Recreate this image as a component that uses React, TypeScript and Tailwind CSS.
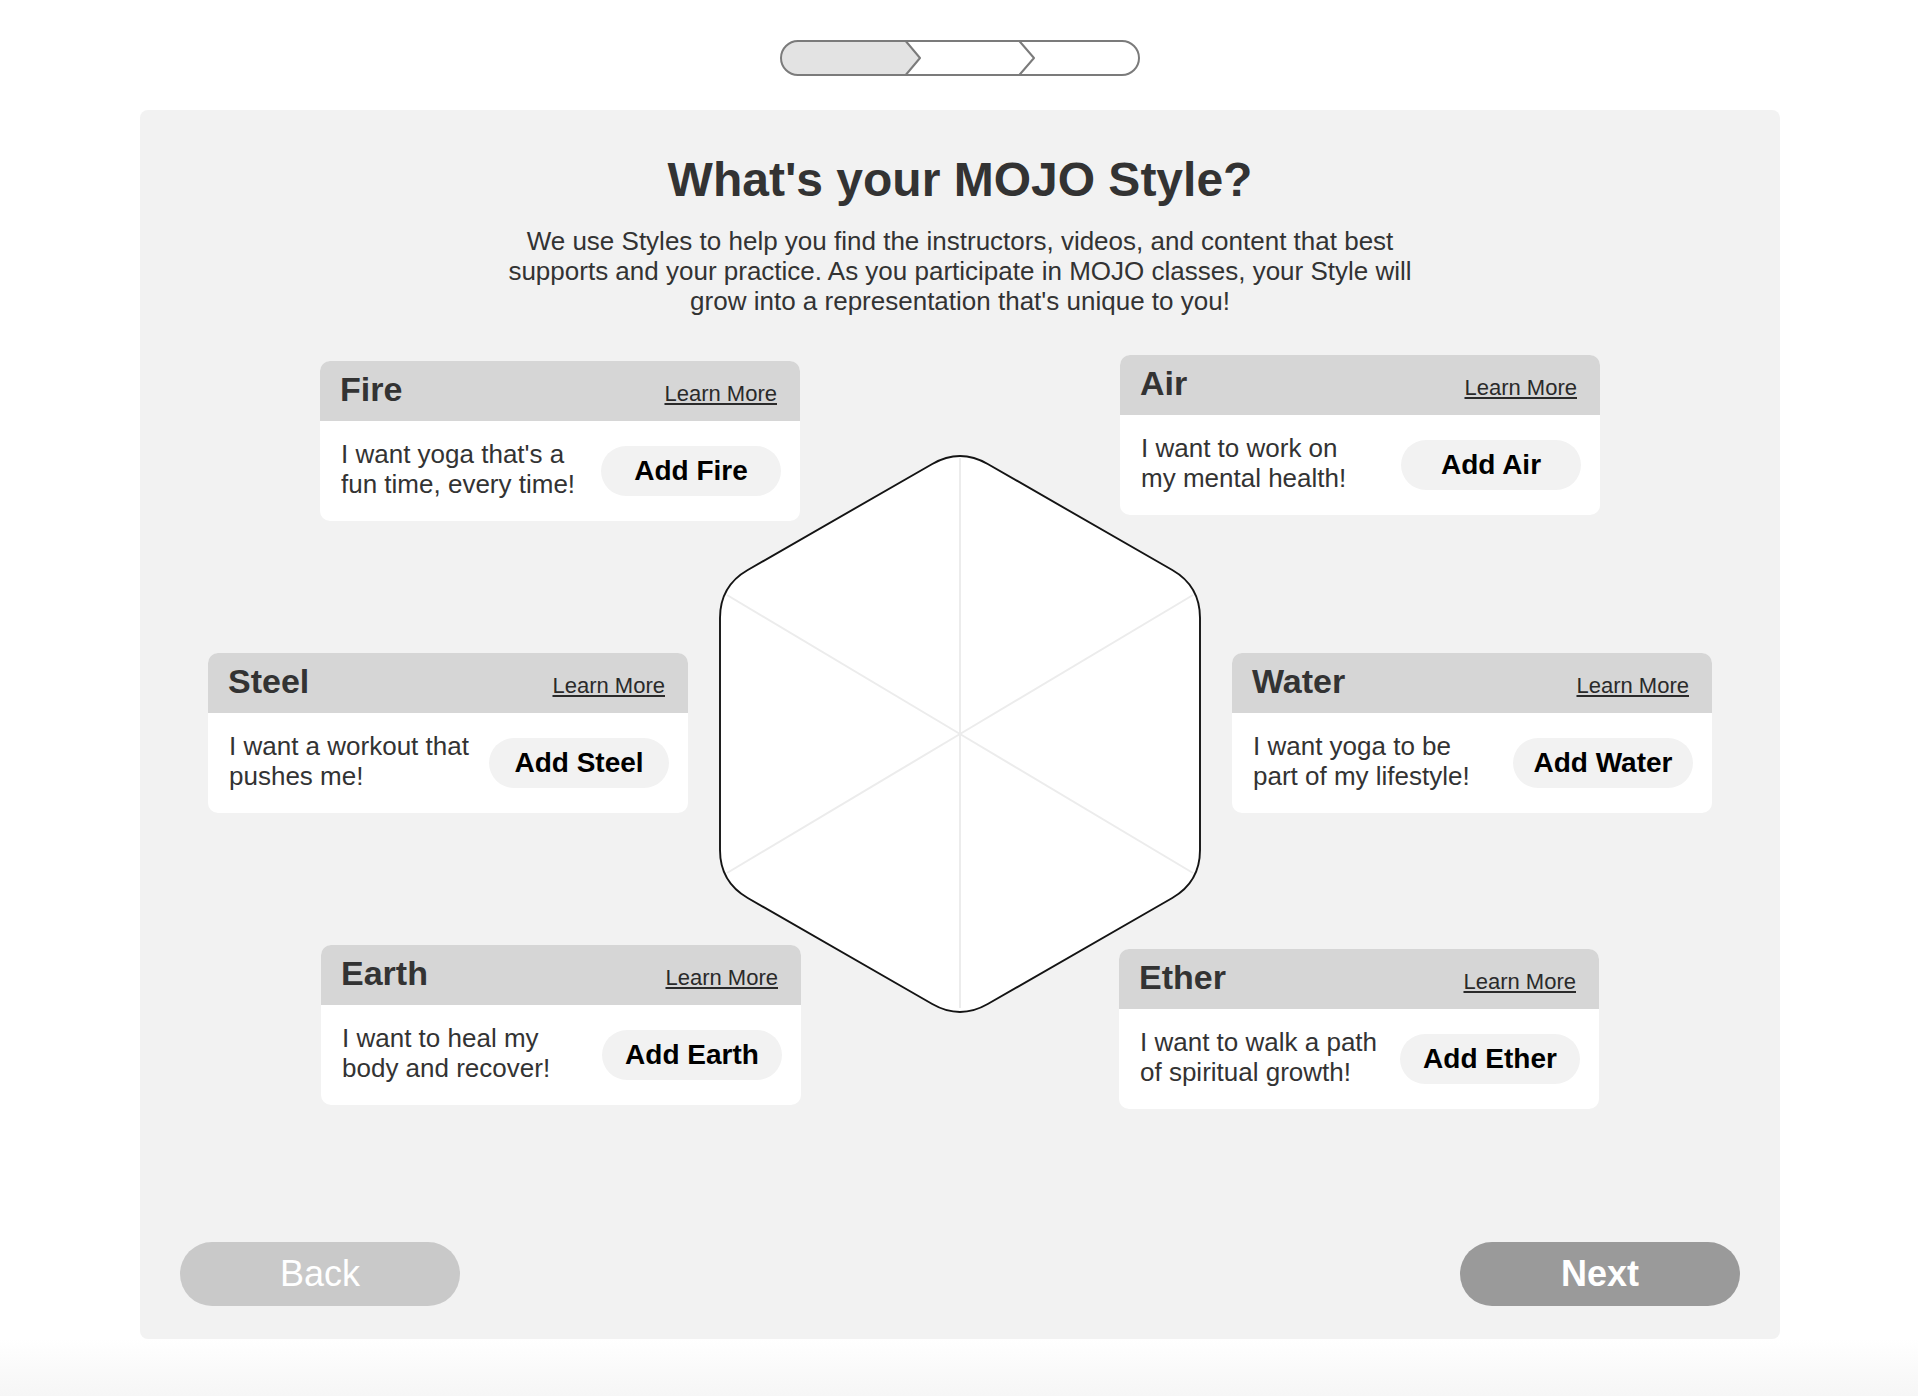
import React from "react";

type Style = {
  name: string;
  lines: [string, string];
  offset?: string;
};

const topRow: Style[] = [
  { name: "Fire", lines: ["I want yoga that's a", "fun time, every time!"], offset: "mt-[6px]" },
  { name: "Air", lines: ["I want to work on", "my mental health!"] },
];

const middleRow: Style[] = [
  { name: "Steel", lines: ["I want a workout that", "pushes me!"] },
  { name: "Water", lines: ["I want yoga to be", "part of my lifestyle!"] },
];

const bottomRow: Style[] = [
  { name: "Earth", lines: ["I want to heal my", "body and recover!"] },
  { name: "Ether", lines: ["I want to walk a path", "of spiritual growth!"], offset: "mt-[4px]" },
];

const Progress = () => (
  <svg width="362" height="38" viewBox="0 0 362 38">
    <rect x="2" y="2" width="358" height="34" rx="17" fill="#ffffff" />
    <path d="M19 2 H126.7 L141 19 L126.7 36 H19 A17 17 0 0 1 19 2 Z" fill="#e3e3e3" />
    <rect x="2" y="2" width="358" height="34" rx="17" fill="none" stroke="#7b7b7b" strokeWidth="2" />
    <path d="M126.7 2 L141 19 L126.7 36" fill="none" stroke="#7b7b7b" strokeWidth="2" strokeLinejoin="round" />
    <path d="M240.3 2 L255 19 L240.3 36" fill="none" stroke="#7b7b7b" strokeWidth="2" strokeLinejoin="round" />
  </svg>
);

const hexPath =
  "M269.74 17.95 L454.26 124.05 Q482 140 482 172 L482 404 Q482 436 454.26 451.95 L269.74 558.05 Q242 574 214.26 558.05 L29.74 451.95 Q2 436 2 404 L2 172 Q2 140 29.74 124.05 L214.26 17.95 Q242 2 269.74 17.95 Z";

const Hexagon = () => (
  <svg width="484" height="578" viewBox="0 0 484 578">
    <path d={hexPath} fill="#ffffff" />
    <g stroke="#ececec" strokeWidth="2">
      <line x1="242" y1="288" x2="242" y2="12" />
      <line x1="242" y1="288" x2="242" y2="562" />
      <line x1="242" y1="288" x2="9" y2="149" />
      <line x1="242" y1="288" x2="475" y2="149" />
      <line x1="242" y1="288" x2="9" y2="427" />
      <line x1="242" y1="288" x2="475" y2="427" />
    </g>
    <path d={hexPath} fill="none" stroke="#141414" strokeWidth="1.9" />
  </svg>
);

const StyleCard = ({ style }: { style: Style }) => (
  <div className={`relative w-[480px] h-[160px] rounded-[10px] overflow-hidden bg-white ${style.offset ?? ""}`}>
    <div className="h-[60px] bg-[#d6d6d6] flex items-baseline justify-between pl-[20px] pr-[23px] pt-[8px]">
      <span className="text-[34px] leading-[40px] font-bold text-[#333]">{style.name}</span>
      <a href="#" className="text-[22px] leading-[26px] text-[#2a2a2a] underline">
        Learn More
      </a>
    </div>
    <div className="h-[100px] flex items-center justify-between pl-[21px] pr-[19px]">
      <p className="text-[26px] leading-[30px] text-[#333] mb-[5px]">
        {style.lines[0]}
        <br />
        {style.lines[1]}
      </p>
      <button className="w-[180px] h-[50px] rounded-full bg-[#f2f2f2] text-[28px] font-bold text-black">
        Add {style.name}
      </button>
    </div>
  </div>
);

const App = () => {
  return (
    <div className="min-h-screen bg-white font-['Liberation_Sans',Arial,sans-serif]">
      <div className="pt-[39px] flex justify-center pl-[2px]">
        <Progress />
      </div>

      <div className="mt-[33px] ml-[140px] w-[1640px] h-[1229px] bg-[#f2f2f2] rounded-lg flex flex-col pt-[42px]">
        <h1 className="text-center text-[48px] leading-[56px] font-bold text-[#333]">
          What's your MOJO Style?
        </h1>
        <p className="mt-[18px] mx-auto w-[940px] text-center text-[26px] leading-[30px] text-[#333]">
          We use Styles to help you find the instructors, videos, and content that best supports and your
          practice. As you participate in MOJO classes, your Style will grow into a representation that's
          unique to you!
        </p>

        <div className="relative mt-[39px]">
          <div className="absolute top-[91px] left-1/2 -translate-x-1/2">
            <Hexagon />
          </div>
          <div className="flex justify-center items-start gap-[320px]">
            {topRow.map((s) => (
              <StyleCard key={s.name} style={s} />
            ))}
          </div>
          <div className="mt-[132px] flex justify-center items-start gap-[544px]">
            {middleRow.map((s) => (
              <StyleCard key={s.name} style={s} />
            ))}
          </div>
          <div className="mt-[132px] flex justify-center items-start gap-[318px]">
            {bottomRow.map((s) => (
              <StyleCard key={s.name} style={s} />
            ))}
          </div>
        </div>

        <div className="mt-auto mb-[33px] px-[40px] flex justify-between">
          <button className="w-[280px] h-[64px] rounded-full bg-[#c9c9c9] text-white text-[36px]">
            Back
          </button>
          <button className="w-[280px] h-[64px] rounded-full bg-[#9a9a9a] text-white text-[36px] font-bold">
            Next
          </button>
        </div>
      </div>

      <div className="h-[57px] bg-linear-to-b from-white to-[#f6f6f6]" />
    </div>
  );
};

export default App;
